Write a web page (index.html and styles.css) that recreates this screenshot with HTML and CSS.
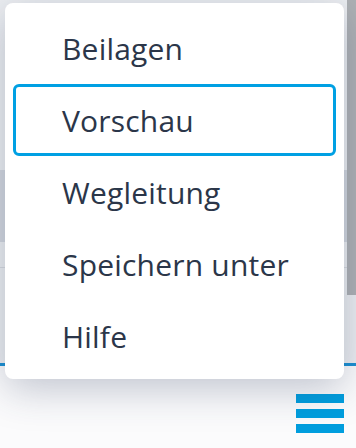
FILE: index.html
```html
<!DOCTYPE html>
<html lang="de">
<head>
    <meta charset="UTF-8">
    <title>Menü</title>
    <link rel="stylesheet" href="styles.css">
</head>
<body>

    <!-- Seite im Hintergrund -->
    <div class="seite">
        <div class="oben">
            <div class="inhalt">
                <div class="abstand"></div>
                <div class="band"></div>
                <div class="trenner"></div>
            </div>
            <div class="scrollbar"></div>
        </div>
        <div class="blaue-linie"></div>
        <div class="fuss">
            <button class="hamburger" aria-label="Menü">
                <span></span>
                <span></span>
                <span></span>
            </button>
        </div>
    </div>

    <!-- Aufklappmenü -->
    <ul class="menu">
        <li class="menu-item">Beilagen</li>
        <li class="menu-item aktiv">Vorschau</li>
        <li class="menu-item">Wegleitung</li>
        <li class="menu-item">Speichern unter</li>
        <li class="menu-item">Hilfe</li>
    </ul>

</body>
</html>
```

FILE: styles.css
```css
/* Allgemein */
body {
    margin: 0;
    font-family: "Open Sans", "Noto Sans", sans-serif;
    background-color: #fbfbfc;
    width: 356px;
    height: 448px;
    overflow: hidden;
    position: relative;
}

/* Seite im Hintergrund */
.seite {
    display: flex;
    flex-direction: column;
    height: 448px;
}

.oben {
    display: flex;
    height: 363px;
    background-color: #eceef1;
}

.inhalt {
    flex: 1;
    display: flex;
    flex-direction: column;
}

.abstand {
    height: 170px;
}

.band {
    height: 72px;
    background-color: #d3d7de;
}

.trenner {
    height: 1px;
    margin-top: 25px;
    background-color: #d6d9de;
}

.scrollbar {
    width: 9px;
    height: 295px;
    background-color: #aeb1b4;
}

.blaue-linie {
    height: 3px;
    background-color: #1b90d2;
}

.fuss {
    flex: 1;
    display: flex;
    justify-content: flex-end;
    align-items: flex-start;
    padding: 28px 12px 0 0;
}

.hamburger {
    display: flex;
    flex-direction: column;
    gap: 6px;
    width: 48px;
    padding: 0;
    border: none;
    background: none;
}

.hamburger span {
    display: block;
    height: 9px;
    background-color: #009ede;
}

/* Menü */
.menu {
    position: absolute;
    top: 3px;
    left: 5px;
    width: 339px;
    height: 376px;
    box-sizing: border-box;
    margin: 0;
    padding: 9px 8px 7px;
    list-style: none;
    background-color: white;
    border-radius: 8px;
    box-shadow: 0 10px 40px rgba(40, 55, 90, 0.28);
}

.menu-item {
    height: 72px;
    box-sizing: border-box;
    display: flex;
    align-items: center;
    padding-left: 46px;
    border: 3px solid transparent;
    border-radius: 6px;
    font-size: 30px;
    font-weight: 370;
    letter-spacing: 0.2px;
    color: #2b3649;
}

.menu-item.aktiv {
    border-color: #00a0e3;
}
```
